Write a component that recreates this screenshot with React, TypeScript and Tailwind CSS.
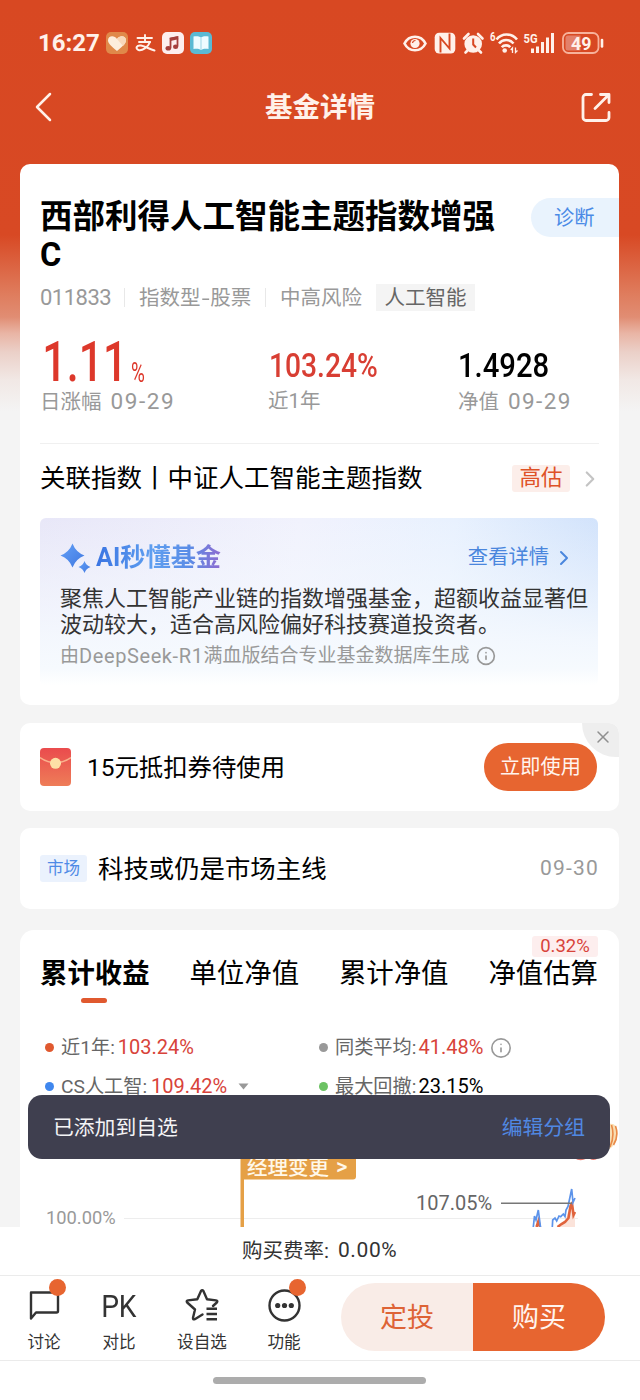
import React from 'react';
import { ChevronRight, Info, X } from 'lucide-react';

const tabs = ['累计收益', '单位净值', '累计净值', '净值估算'];

const StatusIcons: React.FC = () => (
  <svg className="absolute left-[400px] top-[28px] w-[208px] h-[30px]" viewBox="400 28 208 30" fill="none">
    {/* eye */}
    <path d="M404.5 43.5C409 34.5 421 34.5 425.5 43.5C421 52.5 409 52.5 404.5 43.5Z" stroke="#fff1ea" strokeWidth="2.6" />
    <circle cx="415" cy="43.5" r="4.6" fill="#fff1ea" />
    <path d="M412.5 43a3 3 0 0 1 3 -2.5" stroke="#d84822" strokeWidth="1.2" />
    {/* nfc */}
    <rect x="434.7" y="32.7" width="20.6" height="20.8" rx="4.5" fill="#fff1ea" />
    <path d="M440.5 52.5V38L449.5 48.5V33.5" stroke="#d84822" strokeWidth="1.9" />
    {/* alarm */}
    <circle cx="473.2" cy="44" r="8.8" fill="#fff1ea" />
    <path d="M464 38.5L468.5 34M482.5 38.5L478 34M467.5 50.5L465.5 52.5M479 50.5L481 52.5" stroke="#fff1ea" strokeWidth="2.6" strokeLinecap="round" />
    <path d="M473.2 38.5V44.5L476 47.5" stroke="#d84822" strokeWidth="2" />
    {/* wifi */}
    <path d="M496.5 39.5C501.5 32.8 511.5 32.8 517 39.5M499 43.5C502.7 38.8 509.5 38.8 513.5 43.5M501.8 47.2C503.8 44.7 508.2 44.7 510.2 47.2" stroke="#fff1ea" strokeWidth="2.6" />
    <circle cx="504.7" cy="50.5" r="2.3" fill="#fff1ea" />
    <path d="M512.5 53V48L510.7 50M515.5 47.5V52.5L517.5 50.5" stroke="#fff1ea" strokeWidth="1.3" />
    <text x="490" y="41" fontSize="12" fontWeight="700" fill="#fff1ea" textLength="5.5" lengthAdjust="spacingAndGlyphs">6</text>
    {/* signal */}
    <text x="523.5" y="42.5" fontSize="13" fontWeight="700" fill="#fff1ea" textLength="14" lengthAdjust="spacingAndGlyphs">5G</text>
    <path d="M532.5 53V48.5M537.5 53V46.5M542.5 53V42M547.5 53V37.5M552.5 53V33" stroke="#fff1ea" strokeWidth="3" />
    {/* battery */}
    <rect x="563" y="33" width="35.5" height="20" rx="5.5" stroke="#f7b29b" strokeWidth="1.8" />
    <path d="M568 35.5h12.5v15H568a2.5 2.5 0 0 1-2.5-2.5V38a2.5 2.5 0 0 1 2.5-2.5Z" fill="#e3806a" />
    <path d="M602 40V46.5" stroke="#fff1ea" strokeWidth="2.6" strokeLinecap="round" />
    <text x="571" y="49.8" fontSize="19" fontWeight="700" fill="#fff1ea" textLength="20.5" lengthAdjust="spacingAndGlyphs">49</text>
  </svg>
);

const StatusBar: React.FC = () => (
  <div className="relative flex h-[86px] items-center pl-[38px] text-[#fff1ea]">
    <span className="w-[68px] text-[24px] font-bold leading-none">16:27</span>
    <div className="flex gap-[6px]">
      <svg width="22" height="22" viewBox="0 0 22 22">
        <rect width="22" height="22" rx="5" fill="#e0894a" />
        <path d="M11 19C4 13.5 2 11 2 8.3C2 3.5 8.5 3 11 7C13.5 3 20 3.5 20 8.3C20 11 18 13.5 11 19Z" fill="#fdeedd" />
        <path d="M11 7C13.5 3 20 3.5 20 8.3C20 10 19 12 17 14Z" fill="#f8d9bb" />
      </svg>
      <svg width="22" height="22" viewBox="0 0 22 22" fill="none" stroke="#fff1ea" strokeLinecap="round">
        <path d="M3.5 6H18M11 3V10M5 10H16" strokeWidth="1.9" />
        <path d="M16 10C14 15.5 8 19 4.5 18C1 16.5 2.5 13 7 13.5C12 14.5 15 17 20.5 18.5" strokeWidth="2" />
      </svg>
      <svg width="22" height="22" viewBox="0 0 22 22">
        <rect width="22" height="22" rx="5" fill="#fdeeee" />
        <path d="M8.5 16V6.5L15.5 5V14.5" stroke="#a63f3c" strokeWidth="1.8" fill="none" />
        <path d="M8 7.5L16 5.8" stroke="#a63f3c" strokeWidth="3" />
        <ellipse cx="6.3" cy="16.3" rx="2.8" ry="2.3" fill="#a63f3c" />
        <ellipse cx="13.6" cy="14.7" rx="2.6" ry="2.2" fill="#a63f3c" />
      </svg>
      <svg width="22" height="22" viewBox="0 0 22 22">
        <rect width="22" height="22" rx="5" fill="#5ab9d3" />
        <path d="M11 5.5C9 4 6 4 3.5 4.5V17C6 16.5 9 16.5 11 18C13 16.5 16 16.5 18.5 17V4.5C16 4 13 4 11 5.5Z" fill="#eefbff" />
        <path d="M11 5.5V18" stroke="#9bd5e5" strokeWidth="1" />
      </svg>
    </div>
    <StatusIcons />
  </div>
);

const NavHeader: React.FC = () => (
  <div className="flex h-[78px] items-start justify-between pl-[34px] pr-[29px] text-[#fff1ea]">
    <svg className="mt-[5px]" width="20" height="32" viewBox="0 0 20 32" fill="none" stroke="#fff1ea" strokeWidth="2.5" strokeLinecap="round" strokeLinejoin="round">
      <path d="M16 3L3 16L16 29" />
    </svg>
    <h1 className="ml-[5px] mt-[2px] text-[27.5px] leading-[40px] font-bold">基金详情</h1>
    <svg className="mt-[6px]" width="30" height="30" viewBox="0 0 30 30" fill="none" stroke="#fff1ea" strokeWidth="2.8" strokeLinecap="round" strokeLinejoin="round">
      <path d="M10.5 2.5H5A3 3 0 0 0 2 5.5V25.5A3 3 0 0 0 5 28.5H25A3 3 0 0 0 28 25.5V20.5" />
      <path d="M19.5 2.5H28V10.5M27 3.5L14 16.5" />
    </svg>
  </div>
);

const Dot: React.FC<{ color: string }> = ({ color }) => (
  <span className={`mr-[7px] size-[9px] rounded-full ${color}`} />
);

const FundCard: React.FC = () => (
  <section className="h-[541px] rounded-[10px] bg-white px-[20px] pt-[34px]">
    <div className="-mr-[20px] flex items-start justify-between">
      <h2 className="w-[462px] text-[32.5px] font-bold leading-[38px] text-black">西部利得人工智能主题指数增强C</h2>
      <button className="h-[39px] w-[88px] rounded-l-full bg-[#e9f3fd] pl-[23px] pt-[2px] text-left text-[20.3px] text-[#4a8ae6]">诊断</button>
    </div>
    <div className="mt-[10px] flex h-[27px] items-center text-[20.5px] leading-[27px] text-[#999]">
      <span className="w-[84px] text-[22px] tracking-[-0.5px]">011833</span>
      <span className="h-[19px] w-px bg-[#e8e8e8]" />
      <span className="w-[140px] pl-[14px] pt-px whitespace-nowrap">指数型<span className="inline-block scale-x-[1.4] px-[2px]">-</span>股票</span>
      <span className="h-[19px] w-px bg-[#e8e8e8]" />
      <span className="w-[110px] pl-[14px] pt-px">中高风险</span>
      <span className="h-[27px] w-[99px] bg-[#f4f4f4] pt-px text-center text-[#666]">人工智能</span>
    </div>
    <div className="mt-[22px] grid grid-cols-[228px_190px_1fr] text-[20.5px] leading-[24px] text-[#999]">
      <div>
        <div className="flex h-[55px] items-end leading-none text-[#dd382b]">
          <span className="w-[87px] origin-left scale-x-[0.78] pl-[3px] text-[55px] leading-[52px] font-medium">1.11</span>
          <span className="ml-[4px] origin-left scale-x-[0.7] pb-px text-[27px]">%</span>
        </div>
        <div className="pt-px">日涨幅<span className="ml-[9px] text-[22.5px] tracking-[1.6px]">09-29</span></div>
      </div>
      <div>
        <div className="flex h-[55px] items-end pb-[6px] pl-px text-[34px] font-medium leading-none text-[#d83e33]">
          <span className="origin-left scale-x-[0.83]">103.24%</span>
        </div>
        <div className="pt-px">近1年</div>
      </div>
      <div>
        <div className="flex h-[55px] items-end pb-[6px] text-[34px] font-medium leading-none text-black">
          <span className="origin-left scale-x-[0.86]">1.4928</span>
        </div>
        <div className="pt-px">净值<span className="ml-[9px] text-[22.5px] tracking-[1.4px]">09-29</span></div>
      </div>
    </div>
    <div className="mt-[29px] flex h-[70px] items-center border-t border-[#f0f0f0] text-black">
      <span className="text-[25.5px]">关联指数丨中证人工智能主题指数</span>
      <span className="ml-auto h-[27px] w-[58px] rounded-[3px] bg-[#fceeea] text-center text-[21.5px] leading-[26px] text-[#de5227]">高估</span>
      <ChevronRight className="ml-[7px] -mr-[4px] size-[26px] text-[#c4c4c4]" strokeWidth={2} />
    </div>
    <div className="mt-[5px] h-[167px] w-[558px] rounded-[6px] bg-[linear-gradient(to_bottom,transparent,#f5f9fee6_72%,#f6fafe_90%,#ffffff),linear-gradient(97deg,#e8e7f8,#f1f2fd_45%,#e8f1fe_72%,#cfe1fb)] px-[20px]">
      <div className="flex h-[68px] items-center pt-[11px]">
        <svg width="31" height="31" viewBox="0 0 31 31">
          <defs>
            <linearGradient id="spark" x1="0" y1="0" x2="1" y2="1">
              <stop stopColor="#63a0f7" />
              <stop offset="1" stopColor="#3f77e0" />
            </linearGradient>
          </defs>
          <path d="M12.5 1.5Q15.8 10.2 24.5 13.5Q15.8 16.8 12.5 25.5Q9.2 16.8 0.5 13.5Q9.2 10.2 12.5 1.5Z" fill="url(#spark)" />
          <path d="M24.5 19Q26 23.5 30.5 25Q26 26.5 24.5 31Q23 26.5 18.5 25Q23 23.5 24.5 19Z" fill="url(#spark)" />
        </svg>
        <span className="ml-[5px] bg-[linear-gradient(90deg,#3a74e2,#5f9ff0_45%,#5b8ce6_75%,#8f6bd0)] bg-clip-text text-[25.2px] font-bold text-transparent">AI秒懂基金</span>
        <span className="ml-auto text-[20.3px] text-[#4a86dd]">查看详情</span>
        <ChevronRight className="ml-[3px] mr-[2px] size-[24px] text-[#4a86dd]" strokeWidth={2} />
      </div>
      <p className="w-[530px] text-[22px] leading-[26px] text-[#333]">聚焦人工智能产业链的指数增强基金，超额收益显著但波动较大，适合高风险偏好科技赛道投资者。</p>
      <div className="mt-[5px] flex items-center text-[19px] leading-[26px] text-[#999]">
        由<span className="text-[20px] tracking-[0.6px]">DeepSeek-R1</span>满血版结合专业基金数据库生成
        <Info className="ml-[6px] size-[20px]" strokeWidth={2} />
      </div>
    </div>
  </section>
);

const CouponCard: React.FC = () => (
  <section className="relative mt-[18px] flex h-[88px] items-center overflow-hidden rounded-[10px] bg-white px-[20px]">
    <svg width="31" height="38" viewBox="0 0 31 38">
      <defs>
        <linearGradient id="envelope" x1="0" y1="0" x2="0" y2="1">
          <stop stopColor="#ea4b4d" />
          <stop offset="1" stopColor="#ee7d58" />
        </linearGradient>
      </defs>
      <rect width="31" height="38" rx="4" fill="url(#envelope)" />
      <path d="M0 9.5Q15.5 20 31 9.5" stroke="#f9b08c" strokeWidth="1.5" fill="none" />
      <circle cx="15.5" cy="15.3" r="5.5" fill="#fde0a6" />
    </svg>
    <span className="ml-[16px] pt-[2px] text-[24.4px] text-black">15元抵扣券待使用</span>
    <button className="ml-auto mr-[2px] h-[48px] w-[113px] rounded-full bg-[#e76530] text-[20.2px] text-[#fff4ee]">立即使用</button>
    <span className="absolute right-0 top-0 flex h-[34px] w-[37px] items-center justify-center rounded-bl-[34px] bg-[#eee] pb-[6px] pl-[4px]">
      <X className="size-[20px] text-[#8f8f8f]" strokeWidth={1.8} />
    </span>
  </section>
);

const NewsCard: React.FC = () => (
  <section className="mt-[17px] flex h-[81px] items-center rounded-[10px] bg-white pl-[20px] pr-[20px]">
    <span className="h-[27px] w-[47px] rounded-[3px] bg-[#ebf2fd] text-center text-[16.5px] leading-[28px] text-[#4f8ae6]">市场</span>
    <span className="ml-[11px] pt-[2px] text-[25.4px] text-black">科技或仍是市场主线</span>
    <span className="ml-auto text-[21px] tracking-[1.2px] text-[#999]">09-30</span>
  </section>
);

const Chart: React.FC = () => (
  <svg className="absolute left-0 top-[170px] h-[127px] w-[599px]" viewBox="20 1100 599 127">
    <path d="M124 1218.5H578" stroke="#ededed" />
    <text x="46" y="1224" fontSize="18.3" fill="#999">100.00%</text>
    <text x="416" y="1209.5" fontSize="20" fill="#666">107.05%</text>
    <path d="M240.5 1150H353a3 3 0 0 1 3 3V1176.5a3 3 0 0 1-3 3H244V1227H240.5Z" fill="#e5a046" />
    <text x="247" y="1174.5" fontSize="20.5" fill="#fff8ea" fontWeight="500">经理变更</text>
    <text x="336" y="1174" fontSize="22" fill="#fff8ea" fontWeight="500">&gt;</text>
    <path d="M557 1227L565 1221L570 1206L572 1203L575 1214V1227Z" fill="#fbe3da" />
    <path d="M536.5 1227L538.5 1221L540 1227M557.5 1227L561.5 1224L565 1222L568.5 1218L570.5 1206L572 1203.5L573.5 1215L575 1212" stroke="#e0633c" strokeWidth="2.6" fill="none" />
    <path d="M533.3 1227L534.5 1216L536 1220L538.3 1210L540.5 1227M552.3 1227L552.7 1220L555 1218L556.7 1221L559 1216L560.7 1216.7L563.3 1214L565 1216.5L566 1210L568 1206.5L571.7 1189L573 1202.5L575 1198" stroke="#5c93ea" strokeWidth="1.7" fill="none" />
    <path d="M501 1203.2H572" stroke="#777" strokeWidth="1.4" />
    {/* mascot behind the toast */}
    <path d="M608 1124Q617 1122 617.5 1132Q618 1144 608 1150Z" fill="#f9dfb4" />
    <path d="M611.5 1125Q615 1136 610 1147M615.5 1126Q619 1136 613.5 1145" stroke="#e98a48" strokeWidth="1.6" fill="none" />
    <path d="M575 1157.5Q580 1161 586 1158M590 1158Q594 1161 598 1157" stroke="#e0776c" strokeWidth="1.6" fill="none" />
  </svg>
);

const ReturnsCard: React.FC = () => (
  <section className="relative mt-[21px] h-[297px] rounded-t-[14px] bg-white px-[20px]">
    <div className="flex justify-between pr-px pt-[26px] text-[27.4px] leading-[36px] text-black">
      {tabs.map((tab, i) => (
        <div key={tab} className={i === 0 ? 'font-bold' : ''}>
          {tab}
          {i === 0 && <div className="ml-[41px] mt-[6px] h-[5px] w-[26px] rounded-full bg-[#e0592f]" />}
        </div>
      ))}
    </div>
    <span className="absolute right-[21px] top-[6px] h-[21px] w-[66px] rounded-[3px] bg-[#fdeeee] text-center text-[18.5px] leading-[20px] text-[#d8433a]">0.32%</span>
    <div className="mt-[31px] grid grid-cols-[274px_1fr] gap-y-[12px] pl-[5px] text-[19.2px] leading-[27px] text-[#666]">
      <div className="flex items-center">
        <Dot color="bg-[#e0592f]" />近1年:<span className="ml-[3px] text-[20px] text-[#d8433a]">103.24%</span>
      </div>
      <div className="flex items-center">
        <Dot color="bg-[#999]" />同类平均:<span className="ml-[2px] text-[20px] text-[#d8433a]">41.48%</span>
        <Info className="ml-[7px] size-[22px] text-[#999]" strokeWidth={1.8} />
      </div>
      <div className="flex items-center">
        <Dot color="bg-[#3f87ee]" />CS人工智:<span className="ml-[4px] text-[20px] text-[#d8433a]">109.42%</span>
        <svg className="ml-[11px]" width="11" height="7" viewBox="0 0 11 7"><path d="M0.5 0.5H10.5L5.5 6.5Z" fill="#999" /></svg>
      </div>
      <div className="flex items-center">
        <Dot color="bg-[#6cc263]" />最大回撤:<span className="ml-[2px] text-[20px] text-black">23.15%</span>
      </div>
    </div>
    <Chart />
  </section>
);

const Toast: React.FC = () => (
  <div className="absolute left-[28px] top-[1095px] flex h-[64px] w-[582px] items-center justify-between rounded-[14px] bg-[#3f3f4f] px-[25px] pt-[3px] text-[20.8px]">
    <span className="text-[#f4f4f6]">已添加到自选</span>
    <span className="text-[#5088e2]">编辑分组</span>
  </div>
);

const NavItem: React.FC<{ label: string; badge?: boolean; className: string; children: React.ReactNode }> = ({ label, badge, className, children }) => (
  <div className={`relative flex flex-col items-center text-[#333] ${className}`}>
    <div className="flex h-[58px] items-center justify-center">{children}</div>
    <span className="-mt-[3px] text-[16.6px] leading-[24px] whitespace-nowrap">{label}</span>
    {badge && <span className="absolute right-[2px] top-[3px] size-[17px] rounded-full bg-[#e76530]" />}
  </div>
);

const BottomBar: React.FC = () => (
  <footer className="h-[173px] bg-white">
    <div className="flex h-[48px] items-center pl-[242px] text-[20.5px] text-[#333]">
      购买费率: <span className="ml-[9px] text-[21px] tracking-[0.6px]">0.00%</span>
    </div>
    <div className="flex h-[86px] border-y border-[#ebebeb]">
      <NavItem label="讨论" badge className="ml-[20px] w-[48px]">
        <svg width="32" height="32" viewBox="0 0 32 32" fill="none" stroke="#333" strokeWidth="2.4" strokeLinejoin="round">
          <path d="M3 3.5H28.5A1.5 1.5 0 0 1 30 5V22A1.5 1.5 0 0 1 28.5 23.5H8L3 29.5Z" />
        </svg>
      </NavItem>
      <NavItem label="对比" className="ml-[27px] w-[48px]">
        <span className="pt-[2px] text-[32px] leading-none tracking-[-0.5px] origin-center scale-x-[0.88]">PK</span>
      </NavItem>
      <NavItem label="设自选" className="ml-[33px] w-[52px]">
        <svg width="34" height="34" viewBox="0 0 34 34" fill="none" stroke="#333" strokeWidth="2.4" strokeLinejoin="round" strokeLinecap="round">
          <path d="M17.5 26.5L9.8 31.2Q7.8 32 8 29.8L10 21.5L2.2 14.5Q0.9 12.8 3 12.4L12.3 11.2L16 3Q17.2 1.2 18.4 3L22 11.2L31 12.4Q33.2 12.8 31.8 14.5L28 18" />
          <path d="M21.5 20.8H32M21.5 26H32M21.5 31.2H32" strokeLinecap="butt" />
        </svg>
      </NavItem>
      <NavItem label="功能" badge className="ml-[32px] w-[48px]">
        <svg width="33" height="33" viewBox="0 0 33 33" fill="#333">
          <circle cx="16.5" cy="16.5" r="15" fill="none" stroke="#333" strokeWidth="2.4" />
          <circle cx="9.7" cy="16.5" r="2.6" />
          <circle cx="16.5" cy="16.5" r="2.6" />
          <circle cx="23.3" cy="16.5" r="2.6" />
        </svg>
      </NavItem>
      <div className="ml-[33px] mt-[7px] flex h-[68px] w-[264px] overflow-hidden rounded-full text-[27px]">
        <button className="w-[132px] bg-[#f9ece7] pt-[2px] text-[#de6336]">定投</button>
        <button className="w-[132px] bg-[#e76530] pt-[2px] text-[#fff4ee]">购买</button>
      </div>
    </div>
    <div className="ml-[213px] mt-[16px] h-[7px] w-[213px] rounded-full bg-[#acacac]" />
  </footer>
);

export default function App() {
  return (
    <div className="relative h-[1400px] w-[640px] overflow-hidden bg-[#f4f4f4] font-[Roboto,'Noto_Sans_CJK_SC',sans-serif]">
      <div className="h-[1227px] overflow-hidden bg-[linear-gradient(to_bottom,#d84822_0px,#d84924_235px,#df7d5e_295px,#e18d73_317px,#e9b4a4_333px,#ebd0c8_352px,#f1e8e5_380px,#f4f4f4_412px)]">
        <StatusBar />
        <NavHeader />
        <main className="ml-[20px] w-[599px]">
          <FundCard />
          <CouponCard />
          <NewsCard />
          <ReturnsCard />
        </main>
      </div>
      <BottomBar />
      <Toast />
    </div>
  );
}
